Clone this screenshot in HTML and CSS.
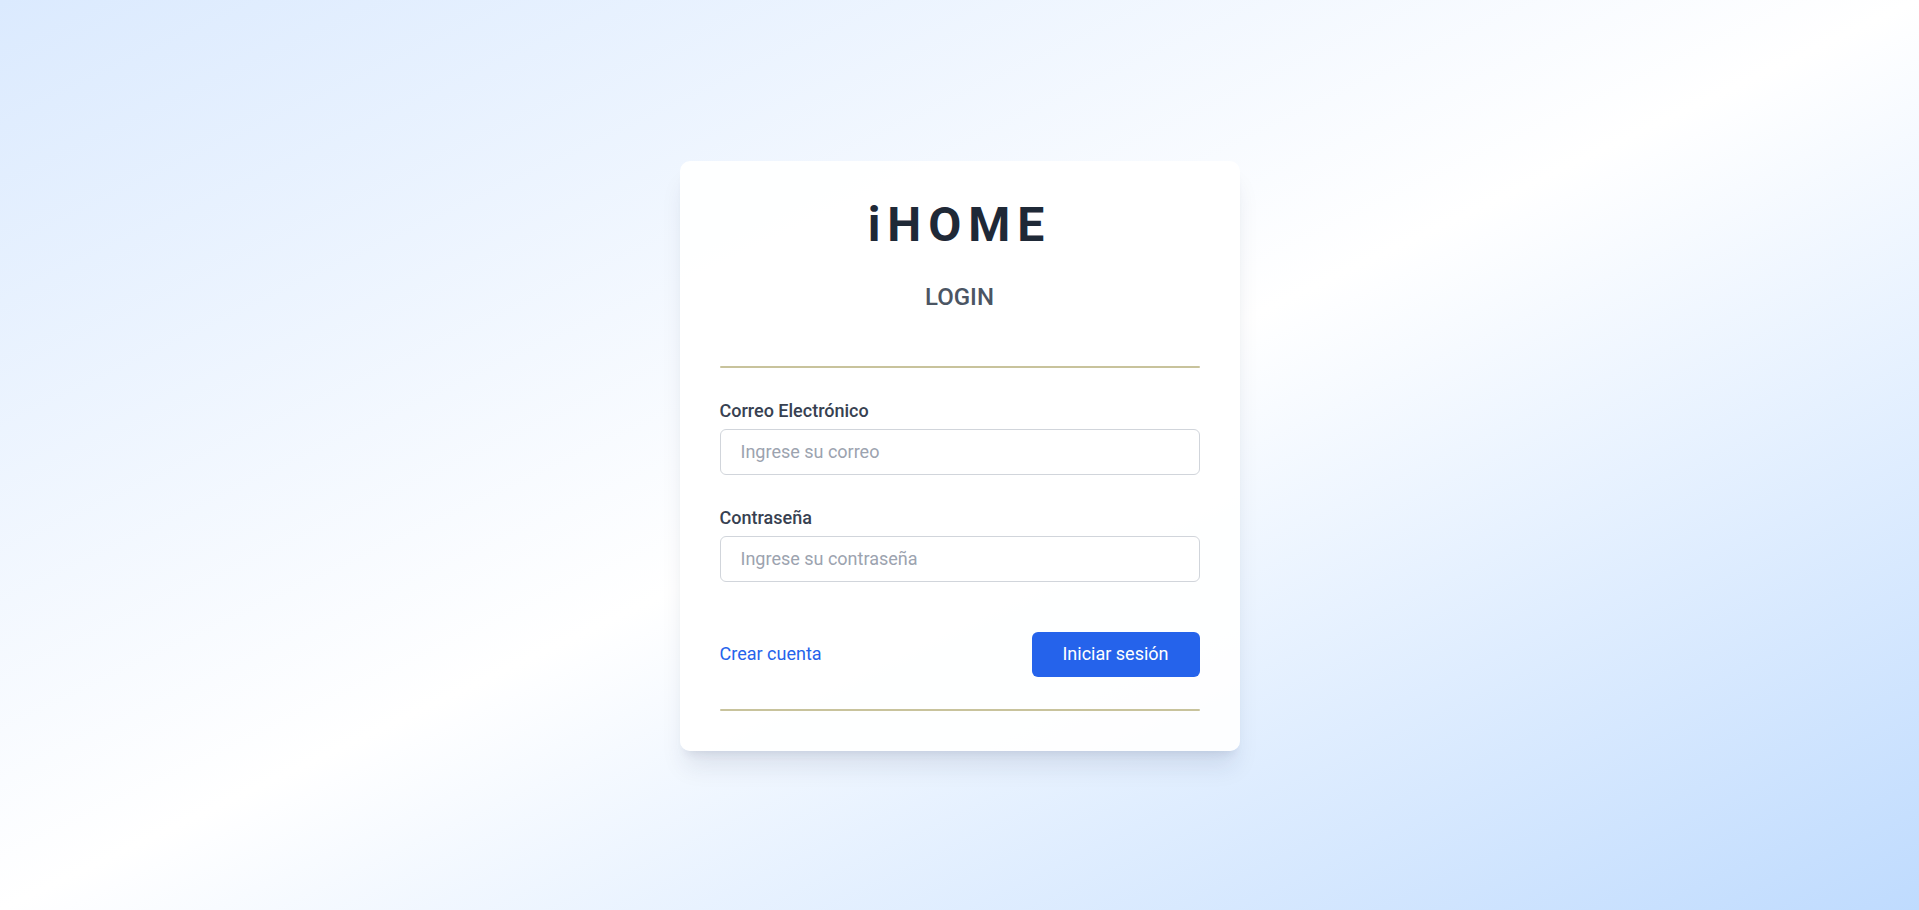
FILE: index.html
```html
<!DOCTYPE html>
<html lang="es">
<head>
<meta charset="utf-8">
<title>iHOME - Login</title>
<link rel="stylesheet" href="styles.css">
</head>
<body>
<main class="page">
  <section class="card">
    <h1 class="brand">iHOME</h1>
    <h2 class="subtitle">LOGIN</h2>
    <div class="divider divider-top"></div>
    <form class="form">
      <div class="field">
        <label class="label" for="email">Correo Electrónico</label>
        <input class="input" id="email" type="email" placeholder="Ingrese su correo">
      </div>
      <div class="field field-second">
        <label class="label" for="pass">Contraseña</label>
        <input class="input" id="pass" type="password" placeholder="Ingrese su contraseña">
      </div>
      <div class="actions">
        <a class="link" href="#">Crear cuenta</a>
        <button class="btn" type="button">Iniciar sesión</button>
      </div>
    </form>
    <div class="divider divider-bottom"></div>
  </section>
</main>
</body>
</html>
```

FILE: styles.css
```css
* { box-sizing: border-box; }

html, body {
  margin: 0;
  padding: 0;
  height: 100%;
}

body {
  font-family: Roboto, "Liberation Sans", Arial, sans-serif;
  background: linear-gradient(to bottom right, #dbeafe 0%, #ffffff 50%, #bfdbfe 100%);
  color: #1f2937;
}

.page {
  min-height: 100vh;
  display: flex;
  align-items: center;
  justify-content: center;
  padding-top: 1px;
}

.card {
  width: 560px;
  padding: 40px;
  background: rgba(255, 255, 255, 0.93);
  border-radius: 10px;
  box-shadow: 0 20px 25px -5px rgba(30, 41, 80, 0.10), 0 8px 10px -6px rgba(30, 41, 80, 0.10);
  display: flex;
  flex-direction: column;
}

.brand {
  margin: 0;
  font-size: 48px;
  line-height: 48px;
  font-weight: 700;
  letter-spacing: 7px;
  text-align: center;
  color: #1f2937;
}

.subtitle {
  margin: 32px 0 0;
  font-size: 24px;
  line-height: 32px;
  font-weight: 500;
  text-align: center;
  color: #4b5563;
}

.divider {
  height: 2px;
  background: #c8c39c;
  border-radius: 1px;
}

.divider-top { margin-top: 53px; }

.form {
  display: flex;
  flex-direction: column;
  margin-top: 29px;
}

.field {
  display: flex;
  flex-direction: column;
}

.field-second { margin-top: 29px; }

.label {
  font-size: 18px;
  line-height: 28px;
  font-weight: 500;
  color: #374151;
  margin-bottom: 4px;
}

.input {
  height: 46px;
  width: 100%;
  padding: 8px 20px;
  font-family: inherit;
  font-size: 18px;
  line-height: 28px;
  color: #1f2937;
  background: #ffffff;
  border: 1px solid #d1d5db;
  border-radius: 6px;
  outline: none;
}

.input::placeholder { color: #9ca3af; }

.actions {
  margin-top: 50px;
  display: flex;
  align-items: center;
  justify-content: space-between;
}

.link {
  font-size: 18px;
  line-height: 28px;
  color: #2563eb;
  text-decoration: none;
}

.btn {
  width: 168px;
  height: 45px;
  padding: 0;
  border: 0;
  border-radius: 6px;
  background: #2563eb;
  color: #ffffff;
  font-family: inherit;
  font-size: 18px;
  line-height: 28px;
  font-weight: 400;
  cursor: pointer;
}

.divider-bottom { margin-top: 32px; }
```
